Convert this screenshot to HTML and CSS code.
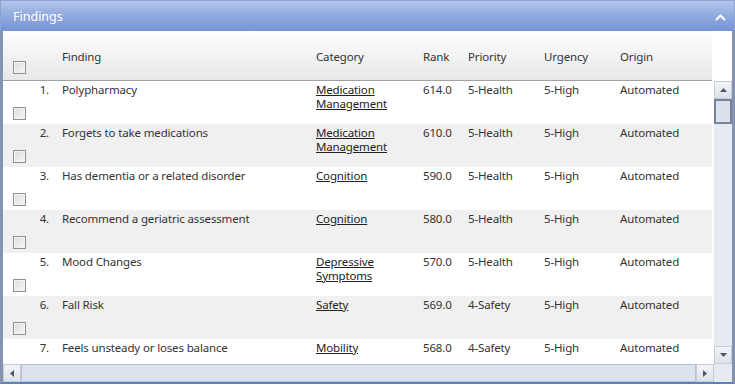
FILE: index.html
```html
<!DOCTYPE html>
<html lang="en">
<head>
    <meta charset="UTF-8">
    <title>Findings</title>
    <link rel="stylesheet" href="styles.css">
</head>
<body>
    <div class="panel">
        <div class="titlebar">
            <span class="title">Findings</span>
            <svg class="collapse" width="11" height="7" viewBox="0 0 11 7"><path d="M1 6 L5.5 1.5 L10 6" fill="none" stroke="#fff" stroke-width="2"/></svg>
        </div>

        <div class="frame">
            <div class="grid">
                <div class="row head">
                    <div class="cell first"><span class="check"></span></div>
                    <div class="cell">Finding</div>
                    <div class="cell">Category</div>
                    <div class="cell">Rank</div>
                    <div class="cell">Priority</div>
                    <div class="cell">Urgency</div>
                    <div class="cell">Origin</div>
                </div>

                <div class="rows">
                    <div class="row">
                        <div class="cell first"><span class="num">1.</span><span class="check"></span></div>
                        <div class="cell">Polypharmacy</div>
                        <div class="cell"><a href="#">Medication Management</a></div>
                        <div class="cell">614.0</div>
                        <div class="cell">5-Health</div>
                        <div class="cell">5-High</div>
                        <div class="cell">Automated</div>
                    </div>
                    <div class="row alt">
                        <div class="cell first"><span class="num">2.</span><span class="check"></span></div>
                        <div class="cell">Forgets to take medications</div>
                        <div class="cell"><a href="#">Medication Management</a></div>
                        <div class="cell">610.0</div>
                        <div class="cell">5-Health</div>
                        <div class="cell">5-High</div>
                        <div class="cell">Automated</div>
                    </div>
                    <div class="row">
                        <div class="cell first"><span class="num">3.</span><span class="check"></span></div>
                        <div class="cell">Has dementia or a related disorder</div>
                        <div class="cell"><a href="#">Cognition</a></div>
                        <div class="cell">590.0</div>
                        <div class="cell">5-Health</div>
                        <div class="cell">5-High</div>
                        <div class="cell">Automated</div>
                    </div>
                    <div class="row alt">
                        <div class="cell first"><span class="num">4.</span><span class="check"></span></div>
                        <div class="cell">Recommend a geriatric assessment</div>
                        <div class="cell"><a href="#">Cognition</a></div>
                        <div class="cell">580.0</div>
                        <div class="cell">5-Health</div>
                        <div class="cell">5-High</div>
                        <div class="cell">Automated</div>
                    </div>
                    <div class="row">
                        <div class="cell first"><span class="num">5.</span><span class="check"></span></div>
                        <div class="cell">Mood Changes</div>
                        <div class="cell"><a href="#">Depressive Symptoms</a></div>
                        <div class="cell">570.0</div>
                        <div class="cell">5-Health</div>
                        <div class="cell">5-High</div>
                        <div class="cell">Automated</div>
                    </div>
                    <div class="row alt">
                        <div class="cell first"><span class="num">6.</span><span class="check"></span></div>
                        <div class="cell">Fall Risk</div>
                        <div class="cell"><a href="#">Safety</a></div>
                        <div class="cell">569.0</div>
                        <div class="cell">4-Safety</div>
                        <div class="cell">5-High</div>
                        <div class="cell">Automated</div>
                    </div>
                    <div class="row">
                        <div class="cell first"><span class="num">7.</span><span class="check"></span></div>
                        <div class="cell">Feels unsteady or loses balance</div>
                        <div class="cell"><a href="#">Mobility</a></div>
                        <div class="cell">568.0</div>
                        <div class="cell">4-Safety</div>
                        <div class="cell">5-High</div>
                        <div class="cell">Automated</div>
                    </div>
                </div>
            </div>

            <div class="vscroll">
                <div class="sbtn"><svg width="7" height="4" viewBox="0 0 7 4"><path d="M0 4 L3.5 0 L7 4 Z" fill="#4d5566"/></svg></div>
                <div class="vthumb"></div>
                <div class="vtrack"></div>
                <div class="sbtn"><svg width="7" height="4" viewBox="0 0 7 4"><path d="M0 0 L3.5 4 L7 0 Z" fill="#4d5566"/></svg></div>
            </div>

            <div class="hscroll">
                <div class="sbtn"><svg width="4" height="7" viewBox="0 0 4 7"><path d="M4 0 L0 3.5 L4 7 Z" fill="#4d5566"/></svg></div>
                <div class="hthumb"></div>
                <div class="sbtn"><svg width="4" height="7" viewBox="0 0 4 7"><path d="M0 0 L4 3.5 L0 7 Z" fill="#4d5566"/></svg></div>
            </div>
            <div class="corner"></div>
        </div>
    </div>
</body>
</html>
```

FILE: styles.css
```css
body {
    margin: 0;
    background: #fff;
    font-family: "Noto Sans", "Open Sans", sans-serif;
    font-size: 11.5px;
    letter-spacing: -0.15px;
    color: #333;
}

.panel {
    width: 735px;
    height: 385px;
    display: flex;
    flex-direction: column;
}

.titlebar {
    height: 31px;
    box-sizing: border-box;
    display: flex;
    align-items: center;
    justify-content: space-between;
    padding: 1px 8px 0 12px;
    background: linear-gradient(to bottom, #b4c6ea, #93acdf 45%, #7593d4);
    border: 1px solid #8ea3cf;
    border-bottom: none;
}

.title {
    color: #fff;
    font-size: 12.5px;
    letter-spacing: 0;
}

.collapse {
    margin-top: 1px;
}

.frame {
    height: 351px;
    display: grid;
    grid-template-columns: 1fr 18px;
    grid-template-rows: 1fr 18px;
    border-left: 3px solid #8593b0;
    border-right: 3px solid #8593b0;
    border-bottom: 2px solid #5e7fc6;
    background: #fff;
}

.grid {
    grid-column: 1 / 3;
    grid-row: 1;
    overflow: hidden;
    display: flex;
    flex-direction: column;
}

.row {
    display: grid;
    grid-template-columns: 53px 254px 107px 45px 76px 76px 98px;
    height: 43px;
    flex-shrink: 0;
}

.row.alt {
    background: #f0f0f0;
}

.row.head {
    height: 50px;
    box-sizing: border-box;
    width: 709px;
    background: linear-gradient(to bottom, #fdfdfd, #e8e8e8);
    border-bottom: 1px solid #a3a3a3;
}

.head .cell {
    padding-top: 19px;
}

.head .first {
    padding-top: 30px;
}

.rows {
    width: 709px;
    overflow: hidden;
}

.cell {
    padding: 2px 0 0 6px;
    line-height: 14px;
}

.first {
    padding: 2px 7px 0 10px;
    display: flex;
    flex-direction: column;
}

.num {
    align-self: flex-end;
}

.check {
    width: 11px;
    height: 11px;
    margin-top: 10px;
    border: 1px solid #8e8f8f;
    background: linear-gradient(135deg, #dcdcdc, #f6f6f6);
    box-shadow: inset 0 0 0 1px #f4f4f4;
}

.head .check {
    margin-top: 0;
}

a {
    color: #222;
    text-decoration: underline;
}

.vscroll {
    grid-column: 2;
    grid-row: 1;
    margin-top: 50px;
    display: flex;
    flex-direction: column;
    background: #e6eaf1;
    position: relative;
    z-index: 1;
}

.sbtn {
    width: 18px;
    height: 18px;
    box-sizing: border-box;
    flex-shrink: 0;
    display: flex;
    align-items: center;
    justify-content: center;
    background: linear-gradient(to bottom, #f2f4f8, #dde2ea);
    border: 1px solid #c5ccd8;
}

.vthumb {
    height: 25px;
    box-sizing: border-box;
    background: #dae1ec;
    border: 2px solid #77839a;
}

.vtrack {
    flex: 1;
}

.hscroll {
    grid-column: 1;
    grid-row: 2;
    display: flex;
    background: #e6eaf1;
}

.hthumb {
    flex: 1;
    background: #dbe2ed;
    border: 1px solid #b6c0d1;
}

.corner {
    grid-column: 2;
    grid-row: 2;
    background: #e6eaf1;
}
```
